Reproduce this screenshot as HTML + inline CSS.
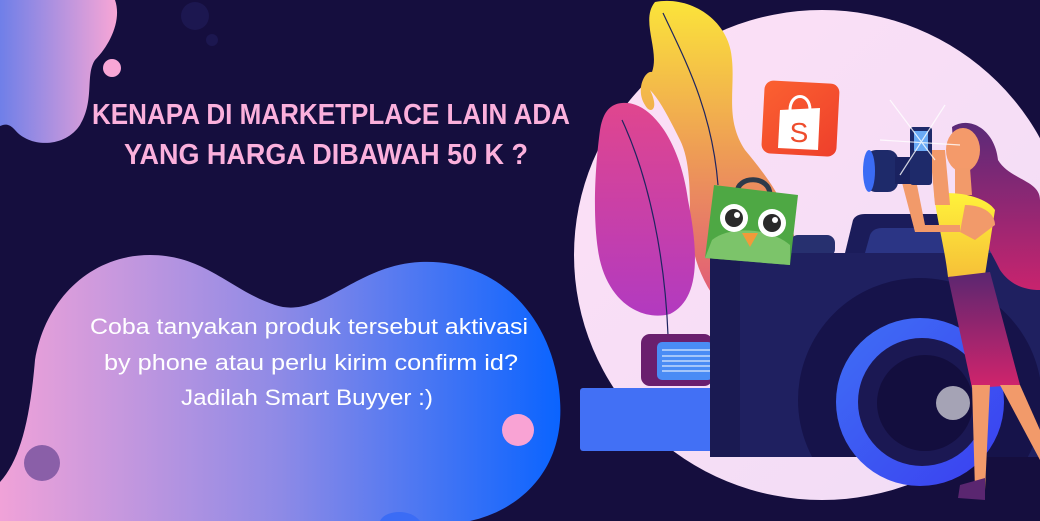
<!DOCTYPE html>
<html><head><meta charset="utf-8"><style>
html,body{margin:0;padding:0;background:#150e3e;}
svg{display:block}
</style></head><body>
<svg width="1040" height="521" viewBox="0 0 1040 521" xmlns="http://www.w3.org/2000/svg">
<defs>
<linearGradient id="gTL" x1="0" x2="1" y1="0" y2="0"><stop offset="0" stop-color="#6f7fe8"/><stop offset="1" stop-color="#f8a6d6"/></linearGradient>
<linearGradient id="gBlob" x1="0" x2="1" y1="0" y2="0"><stop offset="0" stop-color="#f0a2d8"/><stop offset="0.5" stop-color="#8e8ae6"/><stop offset="1" stop-color="#0a64ff"/></linearGradient>
<linearGradient id="gCirc" x1="0" x2="1" y1="0" y2="1"><stop offset="0" stop-color="#fde0f6"/><stop offset="1" stop-color="#f0dcf6"/></linearGradient>
<linearGradient id="gYel" x1="0" x2="0" y1="0" y2="1"><stop offset="0" stop-color="#fbe43a"/><stop offset="0.5" stop-color="#ee9c55"/><stop offset="1" stop-color="#e0587a"/></linearGradient>
<linearGradient id="gMag" x1="0" x2="0" y1="0" y2="1"><stop offset="0" stop-color="#e0468e"/><stop offset="1" stop-color="#b23ac0"/></linearGradient>
<linearGradient id="gRing" x1="0" x2="1" y1="0" y2="1"><stop offset="0" stop-color="#3f6ff5"/><stop offset="1" stop-color="#3a3ff0"/></linearGradient>
<linearGradient id="gHair" x1="0" x2="0" y1="0" y2="1"><stop offset="0" stop-color="#5a2a78"/><stop offset="1" stop-color="#c8246e"/></linearGradient>
<linearGradient id="gSkirt" x1="0" x2="0" y1="0" y2="1"><stop offset="0" stop-color="#5a2670"/><stop offset="1" stop-color="#d2246c"/></linearGradient>
<linearGradient id="gShirt" x1="0" x2="0" y1="0" y2="1"><stop offset="0" stop-color="#fff23a"/><stop offset="1" stop-color="#f6c038"/></linearGradient>
<linearGradient id="gShop" x1="0" x2="1" y1="0" y2="1"><stop offset="0" stop-color="#fb6131"/><stop offset="1" stop-color="#ee3f2b"/></linearGradient>
<clipPath id="body"><rect x="710" y="253" width="340" height="204"/></clipPath>
</defs>
<rect width="1040" height="521" fill="#150e3e"/>
<path d="M0 0 H115 C122 20 110 45 95 60 C85 75 95 100 80 125 C65 148 30 148 15 130 C8 122 3 125 0 126 Z" fill="url(#gTL)"/>
<circle cx="112" cy="68" r="9" fill="#f8a6d6"/>
<circle cx="195" cy="16" r="14" fill="#1c1750"/>
<circle cx="212" cy="40" r="6" fill="#1c1750"/>
<g font-family="'Liberation Sans',sans-serif" font-weight="bold" fill="#fbb0dc" font-size="29">
<text x="92" y="124" textLength="478" lengthAdjust="spacingAndGlyphs">KENAPA DI MARKETPLACE LAIN ADA</text>
<text x="124" y="164" textLength="404" lengthAdjust="spacingAndGlyphs">YANG HARGA DIBAWAH 50 K ?</text>
</g>
<path d="M0 521 L0 482 C20 460 30 420 35 360 C45 300 90 255 150 255 C205 255 230 290 275 305 C320 320 355 265 420 262 C500 258 555 320 560 400 C565 470 520 510 470 521 Z" fill="url(#gBlob)"/>
<circle cx="518" cy="430" r="16" fill="#f9a3d4"/>
<circle cx="42" cy="463" r="18" fill="#8a5fa8"/>
<path d="M380 521 C385 510 410 508 420 521 Z" fill="#3b6cf5"/>
<g font-family="'Liberation Sans',sans-serif" fill="#ffffff" font-size="22" text-anchor="middle">
<text x="309" y="334" textLength="438" lengthAdjust="spacingAndGlyphs">Coba tanyakan produk tersebut aktivasi</text>
<text x="311" y="370" textLength="414" lengthAdjust="spacingAndGlyphs">by phone atau perlu kirim confirm id?</text>
<text x="307" y="405" textLength="252" lengthAdjust="spacingAndGlyphs">Jadilah Smart Buyyer :)</text>
</g>
<ellipse cx="822" cy="255" rx="248" ry="245" fill="url(#gCirc)"/>
<path d="M655 2 C690 -5 730 20 732 60 C735 90 725 120 745 150 C770 180 800 220 795 260 L790 300 L720 305 C700 280 690 250 690 220 C690 190 690 160 680 140 C670 120 660 100 650 90 C660 110 650 115 645 105 C635 90 645 70 652 72 C660 50 640 20 655 2 Z" fill="url(#gYel)"/>
<path d="M663 13 C685 60 712 110 718 185" stroke="#1e2560" stroke-width="1.2" fill="none"/>
<path d="M622 103 C650 100 680 140 688 200 C700 260 698 300 670 314 C640 322 605 300 598 250 C592 210 596 160 600 130 C603 112 610 104 622 103 Z" fill="url(#gMag)"/>
<path d="M622 120 C650 180 665 260 668 335" stroke="#1e2560" stroke-width="1.2" fill="none"/>
<rect x="641" y="334" width="72" height="52" rx="9" fill="#6a1f6e"/>
<rect x="657" y="342" width="56" height="38" rx="5" fill="#4a8cf5"/>
<g stroke="#ffffff" stroke-width="1"><line x1="662" y1="350" x2="713" y2="350"/><line x1="662" y1="356" x2="713" y2="356"/><line x1="662" y1="361" x2="713" y2="361"/><line x1="662" y1="366" x2="713" y2="366"/><line x1="662" y1="371" x2="713" y2="371"/></g>
<rect x="580" y="388" width="135" height="63" rx="3" fill="#4270f5"/>
<path d="M845 253 L853 220 Q856 214 865 214 L1000 214 L1010 253 Z" fill="#1b1c5a"/>
<path d="M865 253 L870 235 Q873 228 882 228 L1000 228 L1005 253 Z" fill="#2b3585"/>
<rect x="790" y="235" width="45" height="22" rx="8" fill="#27306f"/>
<rect x="710" y="253" width="340" height="204" rx="3" fill="#1f2060"/>
<rect x="710" y="253" width="30" height="204" fill="#1a1a52"/>
<circle cx="920" cy="400" r="122" fill="#16134a" clip-path="url(#body)"/>
<circle cx="920" cy="402" r="84" fill="url(#gRing)"/>
<circle cx="922" cy="402" r="64" fill="#1b1853"/>
<circle cx="925" cy="403" r="48" fill="#130e3e"/>
<circle cx="953" cy="403" r="17" fill="#a5a3b5"/>
<rect x="763" y="82" width="75" height="73" rx="9" fill="url(#gShop)" transform="rotate(3 800 118)"/>
<path d="M780 110 L820 108 L818 150 L778 148 Z" fill="#fff"/>
<path d="M790 110 C790 92 810 92 810 110" stroke="#fff" stroke-width="3" fill="none"/>
<text x="799" y="142" font-family="'Liberation Sans',sans-serif" font-size="28" fill="#ee4d2d" text-anchor="middle">S</text>
<path d="M737 193 C737 175 770 175 770 195" stroke="#2d3a4a" stroke-width="5" fill="none"/>
<path d="M714 185 L798 195 L790 265 L705 258 Z" fill="#4ea844"/>
<path d="M712 240 C730 225 770 228 790 245 L790 265 L705 258 Z" fill="#7cc46a"/>
<circle cx="734" cy="218" r="14" fill="#fff"/><circle cx="734" cy="218" r="9" fill="#2a2a2a"/><circle cx="737" cy="215" r="3" fill="#fff"/>
<circle cx="772" cy="223" r="14" fill="#fff"/><circle cx="772" cy="223" r="9" fill="#2a2a2a"/><circle cx="775" cy="220" r="3" fill="#fff"/>
<path d="M742 233 L758 233 L750 247 Z" fill="#f29a3a"/>
<path d="M952 127 C970 115 995 130 998 160 C1010 180 1040 180 1040 200 L1040 290 C1025 290 1010 285 1000 270 C985 240 960 200 955 170 Z" fill="url(#gHair)"/>
<ellipse cx="963" cy="150" rx="17" ry="22" fill="#f49a6a"/>
<path d="M955 168 L970 168 L972 195 L955 195 Z" fill="#f29a6a"/>
<path d="M934 195 C950 190 985 195 995 210 L985 275 L948 277 C945 250 938 225 934 195 Z" fill="url(#gShirt)"/>
<path d="M948 277 L990 272 L1020 385 L972 388 Z" fill="url(#gSkirt)"/>
<path d="M972 385 L990 385 L985 490 L975 490 Z" fill="#f29a6a"/>
<path d="M1000 385 L1020 385 L1040 430 L1040 460 Z" fill="#f29a6a"/>
<path d="M960 485 L985 478 L985 500 L958 498 Z" fill="#5a2670"/>
<path d="M900 175 L915 175 L925 225 L960 225 L960 232 L915 232 Z" fill="#f29a6a"/>
<path d="M930 150 L945 150 L950 205 L935 205 Z" fill="#f29a6a"/>
<path d="M965 205 C985 205 995 215 995 225 L975 240 L960 232 Z" fill="#f29a6a"/>
<rect x="866" y="150" width="32" height="42" rx="10" fill="#1e2a6a"/>
<ellipse cx="869" cy="171" rx="6" ry="21" fill="#3b6cf5"/>
<rect x="895" y="157" width="30" height="27" fill="#1a2260"/>
<rect x="910" y="127" width="22" height="58" rx="3" fill="#1e2a6a"/>
<rect x="914" y="131" width="14" height="20" fill="#6aaaf5"/>
<g stroke="#ffffff" stroke-width="1.2" opacity="0.8"><line x1="890" y1="100" x2="935" y2="160"/><line x1="945" y1="105" x2="900" y2="175"/><line x1="880" y1="140" x2="960" y2="145"/></g>
</svg>
</body></html>
